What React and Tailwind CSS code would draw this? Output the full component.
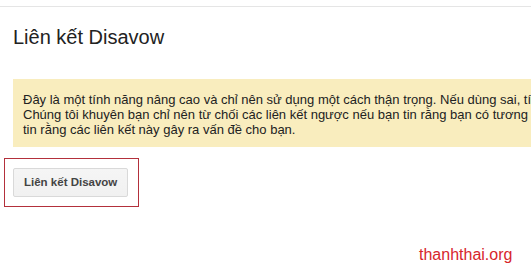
export default function App() {
  return (
    <div className="relative h-[276px] w-[531px] overflow-hidden bg-white font-['Liberation_Sans',Arial,sans-serif] text-[#222]">
      <div className="h-[7px] border-b border-[#e5e5e5]" />

      {/* Title */}
      <h1 className="mt-[19px] pl-[13px] text-[20px] leading-[23px] font-normal">
        Liên kết Disavow
      </h1>

      {/* Warning */}
      <div className="ml-[13px] mt-[30px] w-[700px] bg-[#f9edbe] pl-[10px] pt-[13px] pb-[10px] text-[13px] leading-[15px] text-[#222] whitespace-nowrap">
        <div>
          Đây là một tính năng nâng cao và chỉ nên sử dụng một cách thận trọng. Nếu dùng sai, tính năng này có thể gây hại
        </div>
        <div>
          Chúng tôi khuyên bạn chỉ nên từ chối các liên kết ngược nếu bạn tin rằng bạn có tương đối nhiều liên kết spam
        </div>
        <div>tin rằng các liên kết này gây ra vấn đề cho bạn.</div>
      </div>

      {/* Highlighted button */}
      <div className="ml-[4px] mt-[11px] inline-flex border border-[#b3303b] pt-[9px] pb-[9px] pl-[8px] pr-[10px]">
        <button className="h-[29px] rounded-[2px] border border-[#d9d9d9] bg-gradient-to-b from-[#f5f5f5] to-[#f1f1f1] px-[10px] text-[11.5px] font-bold text-[#444]">
          Liên kết Disavow
        </button>
      </div>

      {/* Watermark */}
      <div className="absolute left-[419px] top-[246px] text-[16px] leading-[18px] text-[#d7262c]">
        thanhthai.org
      </div>
    </div>
  );
}
